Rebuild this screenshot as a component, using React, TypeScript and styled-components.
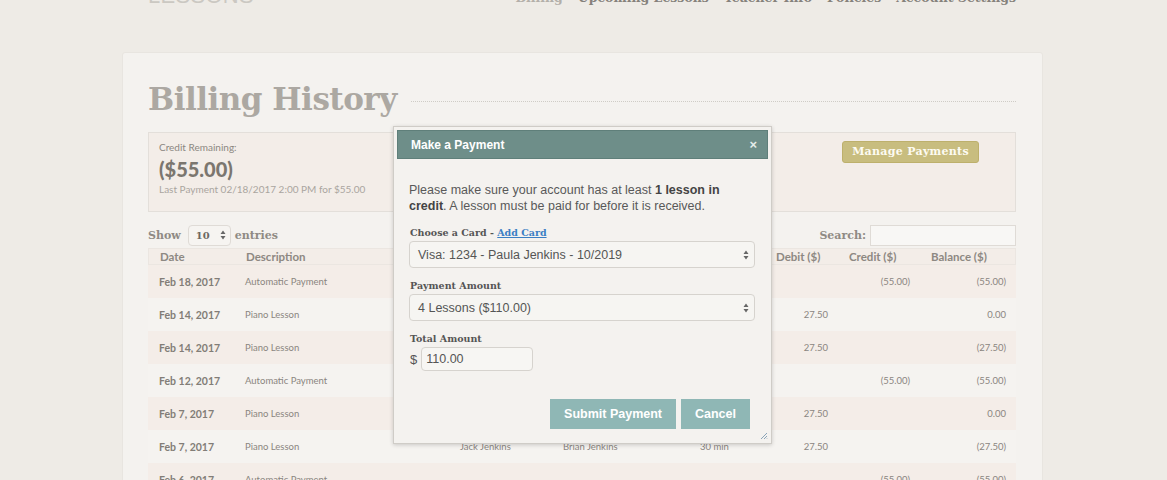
import React from "react";
import styled, { createGlobalStyle } from "styled-components";

const GlobalStyle = createGlobalStyle`
  html, body {
    margin: 0;
    padding: 0;
    background: #eeebe6;
    overflow: hidden;
  }
  body {
    font-family: "Lato", "Open Sans", sans-serif;
  }
`;

const SLAB = `"DejaVu Serif", "Liberation Serif", serif`;

interface Row {
  date: string;
  desc: string;
  student?: string;
  teacher?: string;
  length?: string;
  debit?: string;
  credit?: string;
  balance: string;
}

const rows: Row[] = [
  { date: "Feb 18, 2017", desc: "Automatic Payment", credit: "(55.00)", balance: "(55.00)" },
  { date: "Feb 14, 2017", desc: "Piano Lesson", student: "Jack Jenkins", teacher: "Brian Jenkins", length: "30 min", debit: "27.50", balance: "0.00" },
  { date: "Feb 14, 2017", desc: "Piano Lesson", student: "Jack Jenkins", teacher: "Brian Jenkins", length: "30 min", debit: "27.50", balance: "(27.50)" },
  { date: "Feb 12, 2017", desc: "Automatic Payment", credit: "(55.00)", balance: "(55.00)" },
  { date: "Feb 7, 2017", desc: "Piano Lesson", student: "Jack Jenkins", teacher: "Brian Jenkins", length: "30 min", debit: "27.50", balance: "0.00" },
  { date: "Feb 7, 2017", desc: "Piano Lesson", student: "Jack Jenkins", teacher: "Brian Jenkins", length: "30 min", debit: "27.50", balance: "(27.50)" },
  { date: "Feb 6, 2017", desc: "Automatic Payment", credit: "(55.00)", balance: "(55.00)" },
];

const navItems = ["Billing", "Upcoming Lessons", "Teacher Info", "Policies", "Account Settings"];

export default function App() {
  return (
    <>
      <GlobalStyle />
      <Page>
        <Header>
          <Logo>LESSONS</Logo>
          <Nav>
            {navItems.map((n, i) => (
              <NavLink key={n} active={i === 0}>{n}</NavLink>
            ))}
          </Nav>
        </Header>
        <Card>
          <TitleRow>
            <Title>Billing History</Title>
            <Dots />
          </TitleRow>
          <CreditBox>
            <div>
              <CreditLabel>Credit Remaining:</CreditLabel>
              <CreditAmount>($55.00)</CreditAmount>
              <CreditNote>Last Payment 02/18/2017 2:00 PM for $55.00</CreditNote>
            </div>
            <ManageButton>Manage Payments</ManageButton>
          </CreditBox>
          <Controls>
            <SlabLabel>
              Show
              <SmallSelect>
                10
                <Arrows />
              </SmallSelect>
              entries
            </SlabLabel>
            <SlabLabel>
              Search:
              <SearchInput />
            </SlabLabel>
          </Controls>
          <Table>
            <HeadRow>
              <Cell>Date</Cell>
              <Cell>Description</Cell>
              <Cell>Student</Cell>
              <Cell>Teacher</Cell>
              <Cell>Length</Cell>
              <Cell>Debit ($)</Cell>
              <Cell>Credit ($)</Cell>
              <Cell>Balance ($)</Cell>
            </HeadRow>
            {rows.map((r, i) => (
              <BodyRow key={i} odd={i % 2 === 0}>
                <DateCell>{r.date}</DateCell>
                <Cell>{r.desc}</Cell>
                <Cell>{r.student}</Cell>
                <Cell>{r.teacher}</Cell>
                <Cell>{r.length}</Cell>
                <NumCell>{r.debit}</NumCell>
                <NumCell>{r.credit}</NumCell>
                <NumCell>{r.balance}</NumCell>
              </BodyRow>
            ))}
          </Table>

          <Modal>
            <ModalHeader>
              <span>Make a Payment</span>
              <Close>×</Close>
            </ModalHeader>
            <ModalBody>
              <Intro>
                Please make sure your account has at least <b>1 lesson in credit</b>. A lesson must
                be paid for before it is received.
              </Intro>
              <FieldLabel>
                Choose a Card - <AddCard>Add Card</AddCard>
              </FieldLabel>
              <FakeSelect>
                Visa: 1234 - Paula Jenkins - 10/2019
                <Arrows />
              </FakeSelect>
              <FieldLabel>Payment Amount</FieldLabel>
              <FakeSelect>
                4 Lessons ($110.00)
                <Arrows />
              </FakeSelect>
              <FieldLabel>Total Amount</FieldLabel>
              <TotalRow>
                <span>$</span>
                <TotalInput>110.00</TotalInput>
              </TotalRow>
              <Buttons>
                <ModalButton>Submit Payment</ModalButton>
                <ModalButton>Cancel</ModalButton>
              </Buttons>
            </ModalBody>
            <Grip width="8" height="8" viewBox="0 0 8 8">
              <path d="M7 1 L1 7 M7 4 L4 7 M7 6.5 L6.5 7" stroke="#8aa4b8" strokeWidth="1" />
            </Grip>
          </Modal>
        </Card>
      </Page>
    </>
  );
}

function Arrows() {
  return (
    <ArrowSvg width="6" height="10" viewBox="0 0 6 10">
      <path d="M3 0.5 L5.5 4 L0.5 4 Z M3 9.5 L5.5 6 L0.5 6 Z" fill="#666" />
    </ArrowSvg>
  );
}

const Page = styled.div`
  width: 1167px;
  height: 480px;
  overflow: hidden;
`;

const Header = styled.div`
  height: 40px;
  margin-top: -33px;
  display: flex;
  align-items: flex-end;
  justify-content: space-between;
  padding: 0 151px 0 148px;
`;

const Logo = styled.div`
  font-family: "Liberation Sans", Arial, sans-serif;
  font-size: 22px;
  letter-spacing: 0.3px;
  color: #cbc8c2;
  line-height: 22px;
`;

const Nav = styled.div`
  display: flex;
  gap: 15px;
  margin-bottom: 3px;
`;

const NavLink = styled.span<{ active?: boolean }>`
  font-family: ${SLAB};
  font-weight: bold;
  font-size: 12.5px;
  line-height: 12px;
  color: ${p => (p.active ? "#b3afa9" : "#85817b")};
`;

const Card = styled.div`
  position: relative;
  margin: 45px 0 0 122px;
  width: 921px;
  height: 600px;
  box-sizing: border-box;
  background: #f4f2ef;
  border: 1px solid #e8e5e0;
  border-radius: 3px;
  padding: 22px 26px 0 25px;
`;

const TitleRow = styled.div`
  display: flex;
  align-items: center;
  gap: 14px;
  height: 48px;
`;

const Title = styled.h1`
  margin: 0;
  font-family: ${SLAB};
  font-weight: bold;
  font-size: 31px;
  letter-spacing: -0.5px;
  color: #aca8a2;
  white-space: nowrap;
`;

const Dots = styled.div`
  flex: 1;
  border-top: 1px dotted #cfccc6;
  margin-top: 4px;
`;

const CreditBox = styled.div`
  margin-top: 9px;
  height: 80px;
  box-sizing: border-box;
  background: #f3ede8;
  border: 1px solid #e3dfda;
  display: flex;
  justify-content: space-between;
  align-items: flex-start;
  padding: 8px 36px 0 10px;
`;

const CreditLabel = styled.div`
  font-size: 10px;
  color: #8c8781;
  line-height: 13px;
`;

const CreditAmount = styled.div`
  font-size: 20px;
  font-weight: 900;
  color: #7b766f;
  line-height: 26px;
  margin-top: 2px;
`;

const CreditNote = styled.div`
  font-size: 10px;
  color: #aaa59f;
  line-height: 14px;
`;

const ManageButton = styled.div`
  background: #c8bd7f;
  color: #fdfbf2;
  font-family: ${SLAB};
  font-weight: bold;
  font-size: 11px;
  padding: 3px 9px 4px;
  border-radius: 3px;
  border: 1px solid #bdb06c;
  letter-spacing: 0.3px;
`;

const Controls = styled.div`
  margin-top: 11px;
  height: 24px;
  display: flex;
  justify-content: space-between;
  align-items: center;
`;

const SlabLabel = styled.div`
  display: flex;
  align-items: center;
  gap: 4px;
  font-family: ${SLAB};
  font-weight: bold;
  font-size: 11px;
  color: #8f8a84;
`;

const SmallSelect = styled.div`
  width: 43px;
  height: 21px;
  box-sizing: border-box;
  border: 1px solid #dfdbd6;
  border-radius: 4px;
  background: #f6f4f1;
  display: flex;
  align-items: center;
  justify-content: space-between;
  padding: 0 4px 0 7px;
  font-size: 10px;
  color: #6d6862;
  margin-left: 3px;
`;

const SearchInput = styled.div`
  width: 146px;
  height: 21px;
  box-sizing: border-box;
  border: 1px solid #dfdbd6;
  background: #f8f7f5;
`;

const ArrowSvg = styled.svg`
  flex: none;
`;

const Table = styled.div`
  margin-top: 1px;
`;

const grid = `
  display: grid;
  grid-template-columns: 87px 215px 103px 137px 75px 73px 82px 96px;
  align-items: center;
`;

const HeadRow = styled.div`
  ${grid};
  height: 15px;
  background: #f3ede8;
  border: 1px solid #ebe6e1;
  font-size: 11.5px;
  font-weight: bold;
  color: #8d8882;
`;

const Cell = styled.div`
  padding: 0 10px;
  white-space: nowrap;
  &:first-child {
    padding-left: 11px;
  }
`;

const BodyRow = styled.div<{ odd: boolean }>`
  ${grid};
  height: 33px;
  background: ${p => (p.odd ? "#f4ede8" : "#f5f3f0")};
  font-size: 9.5px;
  color: #8a857f;
`;

const DateCell = styled(Cell)`
  font-size: 10.5px;
  font-weight: bold;
  color: #827d77;
`;

const NumCell = styled(Cell)`
  text-align: right;
`;

const Modal = styled.div`
  position: absolute;
  left: 270px;
  top: 73px;
  width: 379px;
  height: 318px;
  box-sizing: border-box;
  background: #f4f2ef;
  border: 1px solid #cfccc7;
  padding: 3px;
  box-shadow: 0 1px 4px rgba(0, 0, 0, 0.18);
  font-family: "Liberation Sans", Arial, sans-serif;
`;

const ModalHeader = styled.div`
  height: 29px;
  background: #6e8e89;
  border: 1px solid #5f7f7a;
  box-sizing: border-box;
  display: flex;
  align-items: center;
  justify-content: space-between;
  padding: 0 10px 0 13px;
  color: #fff;
  font-weight: bold;
  font-size: 12px;
`;

const Close = styled.span`
  font-size: 13px;
  color: #e3ecea;
`;

const ModalBody = styled.div`
  padding: 23px 13px 0 12px;
  color: #555;
`;

const Intro = styled.p`
  margin: 0 0 13px;
  font-size: 12.5px;
  line-height: 16px;
  color: #595959;
  b {
    color: #444;
  }
`;

const FieldLabel = styled.div`
  font-family: ${SLAB};
  font-weight: bold;
  font-size: 9.5px;
  color: #555;
  line-height: 12px;
  margin: 0 0 2px 1px;
`;

const AddCard = styled.span`
  color: #3b7fc4;
  text-decoration: underline;
`;

const FakeSelect = styled.div`
  height: 27px;
  box-sizing: border-box;
  border: 1px solid #d6d3ce;
  border-radius: 4px;
  background: #f6f5f2;
  display: flex;
  align-items: center;
  justify-content: space-between;
  padding: 0 5px 0 8px;
  font-size: 12.5px;
  color: #555;
  margin-bottom: 12px;
`;

const TotalRow = styled.div`
  display: flex;
  align-items: center;
  gap: 4px;
  font-size: 13px;
  color: #555;
  margin-left: 1px;
`;

const TotalInput = styled.div`
  width: 112px;
  height: 24px;
  box-sizing: border-box;
  border: 1px solid #d6d3ce;
  border-radius: 4px;
  background: #f7f6f3;
  display: flex;
  align-items: center;
  padding-left: 4px;
  font-size: 12.5px;
`;

const Buttons = styled.div`
  display: flex;
  justify-content: flex-end;
  gap: 5px;
  margin-top: 28px;
  padding-right: 5px;
`;

const ModalButton = styled.div`
  height: 30px;
  display: flex;
  align-items: center;
  padding: 0 14px;
  background: #8fb7b5;
  color: #fff;
  font-weight: bold;
  font-size: 12.5px;
`;

const Grip = styled.svg`
  position: absolute;
  right: 3px;
  bottom: 3px;
`;
